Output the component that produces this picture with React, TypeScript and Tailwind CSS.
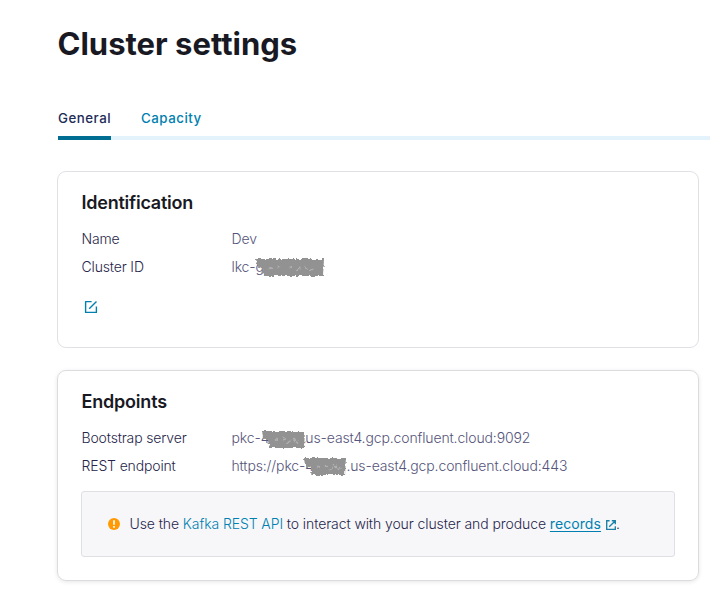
import type { ReactNode } from "react";

function Scribble({ width, seed, className }: { width: number; seed: number; className: string }) {
  const id = `rough-${seed}`;
  return (
    <svg className={`absolute overflow-visible ${className}`} width={width} height="20" viewBox={`0 0 ${width} 20`} aria-hidden="true">
      <defs>
        <filter id={id} x="-10%" y="-20%" width="120%" height="140%">
          <feTurbulence type="fractalNoise" baseFrequency="0.3" numOctaves="2" seed={seed} result="n" />
          <feDisplacementMap in="SourceGraphic" in2="n" scale="5" xChannelSelector="R" yChannelSelector="G" />
          <feGaussianBlur stdDeviation="0.6" />
        </filter>
      </defs>
      <g filter={`url(#${id})`}>
        <path d={`M1 1 L${width} 1 L${width - 1} 18 L9 18 L7 11 L2 8 Z`} fill="#929292" />
        <path
          d={`M14 11l3-2M22 8l2 2M${width * 0.5} 10l3-1M${width * 0.6} 13l4-3M${width * 0.72} 8l3 3M${width * 0.8} 13l3-2`}
          stroke="#b2b2b2"
          strokeWidth="1.1"
        />
      </g>
    </svg>
  );
}

function EditIcon() {
  return (
    <svg width="14" height="14" viewBox="0 0 14 14" fill="none" stroke="#0080b0" strokeWidth="1.4" strokeLinejoin="round" aria-hidden="true">
      <path d="M7.6 1.6H1.6v10.8h10.8V6.4M5.2 8.8l7.3-7.3" />
    </svg>
  );
}

function ExternalIcon() {
  return (
    <svg className="ml-[5px] inline-block align-[-1px]" width="10" height="10" viewBox="0 0 10 10" fill="none" stroke="#1a80a6" strokeWidth="1.35" aria-hidden="true">
      <path d="M3.6 .7H.7v8.6h8.6V6.2M5.8.7h3.5v3.5M9.1.9L3.2 6.8" />
    </svg>
  );
}

function AlertIcon() {
  return (
    <svg width="12" height="12" viewBox="0 0 12 12" aria-hidden="true">
      <circle cx="6" cy="6" r="6" fill="#ff9a05" />
      <path d="M6 2.2v4.6M6 8v1.8" stroke="#fff" strokeWidth="1.7" />
    </svg>
  );
}

function Row({ label, children }: { label: string; children: ReactNode }) {
  return (
    <div className="flex h-7 items-center text-sm leading-5 font-light">
      <dt className="w-[150px] shrink-0 tracking-[-0.15px] text-[#27264a]">{label}</dt>
      <dd className="relative tracking-[-0.13px] whitespace-nowrap text-[#55547a]">{children}</dd>
    </div>
  );
}

export default function App() {
  return (
    <main className="h-[595px] w-[710px] overflow-hidden bg-white pl-[57px] font-['Inter',sans-serif]">
      <h1 className="ml-[0.5px] pt-6 text-[31px] leading-10 font-bold tracking-[0.01px] text-[#191924]">Cluster settings</h1>
      <nav className="mt-[42px] ml-px flex h-[34px] gap-[30px] border-b-4 border-[#e3f2fb] text-[13.3px] leading-6 font-medium tracking-[0.5px]">
        <a className="h-[34px] w-[53px] border-b-4 border-[#006d92] whitespace-nowrap text-[#1d2b57]">General</a>
        <a className="h-[34px] text-[#0080b0]">Capacity</a>
      </nav>

      <section className="mt-[31px] h-[177px] w-[642px] rounded-[9px] border border-[#e0e0e6] pt-[18px] pr-6 pl-[23.5px]">
        <h2 className="mb-[9px] text-lg leading-[26px] font-semibold tracking-[-0.23px] text-[#191924]">Identification</h2>
        <dl>
          <Row label="Name">Dev</Row>
          <Row label="Cluster ID">
            lkc-g
            <Scribble width={69} seed={4} className="top-px left-[23px]" />
          </Row>
        </dl>
        <div className="mt-[19px] ml-[2.5px]">
          <EditIcon />
        </div>
      </section>

      <section className="mt-[22px] h-[211px] w-[642px] rounded-[9px] border border-[#dcdce0] pt-[18px] pr-6 pl-[23.5px] shadow-[0_1px_4px_rgba(0,0,0,0.1)]">
        <h2 className="mb-[9px] text-lg leading-[26px] font-semibold tracking-[-0.2px] text-[#191924]">Endpoints</h2>
        <dl>
          <Row label="Bootstrap server">
            pkc-4<span className="inline-block w-[36px]" />us-east4.gcp.confluent.cloud:9092
            <Scribble width={44} seed={8} className="top-[2px] left-[29.5px]" />
          </Row>
          <Row label="REST endpoint">
            https://pkc-4<span className="inline-block w-[32.5px]" />.us-east4.gcp.confluent.cloud:443
            <Scribble width={43} seed={12} className="top-px left-[71.5px]" />
          </Row>
        </dl>
        <div className="mt-[11px] -ml-[0.5px] flex h-[66px] w-[594px] items-center rounded-[3px] border border-[#dfdfe6] bg-[#f7f7fa] pl-[26px] text-sm leading-5 font-light tracking-[-0.09px] text-[#27264a]">
          <AlertIcon />
          <p className="ml-[9.5px] whitespace-nowrap">
            Use the <a className="text-[#0080b0]">Kafka REST API</a> to interact with your cluster and produce{" "}
            <a className="font-normal tracking-[0.08px] text-[#0080b0] underline underline-offset-2">records</a>
            <ExternalIcon />.
          </p>
        </div>
      </section>
    </main>
  );
}
